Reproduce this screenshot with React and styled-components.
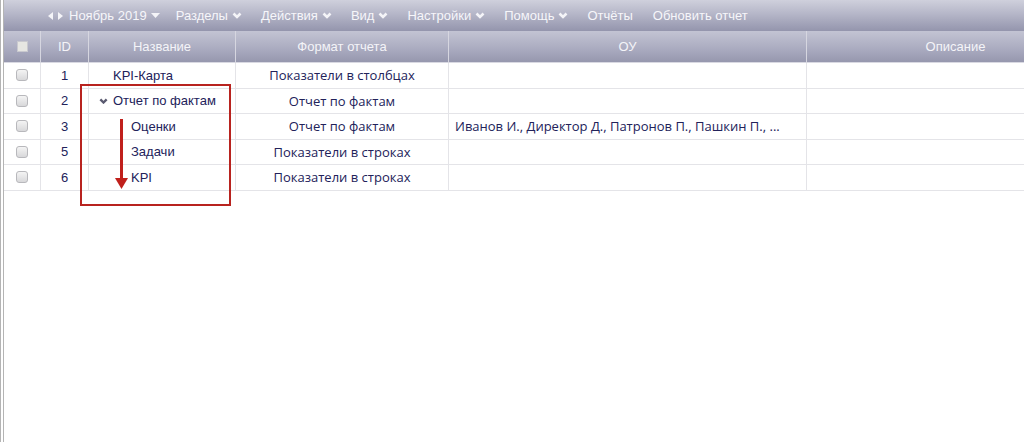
import React from "react";
import styled, { createGlobalStyle } from "styled-components";

const Global = createGlobalStyle`
  html, body { margin: 0; padding: 0; background: #fff; }
  body { font-family: "Liberation Sans", Arial, sans-serif; }
`;

const COLS = "36px 48px 147px 213px 358px 298px";

const Page = styled.div`
  position: relative;
  height: 442px;
  overflow: hidden;
  border-left: 1px solid #b4b4b4;
  padding-left: 2px;
`;

const Frame = styled.div`
  height: 100%;
  border-left: 1px solid #b4b4b4;
  overflow: hidden;
`;

const Toolbar = styled.div`
  height: 31px;
  display: flex;
  align-items: center;
  padding-left: 44px;
  gap: 17px;
  background: linear-gradient(#cfd0dc, #b5b6c8 45%, #9495ad);
  color: #f6f6fa;
  font-size: 13px;
  white-space: nowrap;
`;

const MenuItem = styled.div`
  display: flex;
  align-items: center;
  gap: 4px;
  margin-right: ${(p) => p.$extra || 0}px;
`;

const Arrows = styled.div`
  display: flex;
  align-items: center;
  gap: 5px;
  margin-right: -11px;
`;

const HeaderRow = styled.div`
  display: grid;
  grid-template-columns: ${COLS};
  height: 32px;
  background: linear-gradient(#c3c4d3, #a9aabf 60%, #9697ae);
  border-bottom: 1px solid #d9d9e2;
  box-sizing: border-box;
`;

const HeadCell = styled.div`
  display: flex;
  align-items: center;
  justify-content: center;
  color: #f4f4f8;
  font-size: 13px;
  border-left: ${(p) => (p.$first ? "none" : "1px solid #d6d6e0")};
`;

const Row = styled.div`
  display: grid;
  grid-template-columns: ${COLS};
  height: 25.5px;
  box-sizing: border-box;
  border-bottom: 1px solid #e4e4e8;
`;

const Cell = styled.div`
  display: flex;
  align-items: center;
  justify-content: ${(p) => p.$align || "center"};
  padding-left: ${(p) => p.$pad || 0}px;
  color: #22225a;
  font-size: 13px;
  font-family: ${(p) => (p.$soft ? '"Open Sans", sans-serif' : '"Liberation Sans", Arial, sans-serif')};
  border-left: ${(p) => (p.$first ? "none" : "1px solid #e4e4e8")};
  white-space: nowrap;
  overflow: hidden;
`;

const Check = styled.div`
  width: 12px;
  height: 12px;
  border-radius: 3px;
  border: 1px solid #b8b8bc;
  background: linear-gradient(#f4f4f4, #d8d8da);
  box-sizing: border-box;
`;

const HeadCheck = styled.div`
  width: 11px;
  height: 11px;
  background: #e6e6e2;
  border: 1px solid #c9c9cf;
  box-sizing: border-box;
`;

const Toggle = styled.span`
  display: inline-flex;
  width: 14px;
  margin-left: -14px;
`;

const Annotation = styled.svg`
  position: absolute;
  left: 0;
  top: 0;
  pointer-events: none;
`;

const Chevron = ({ color = "#f4f4f8", size = 10 }) => (
  <svg width={size} height={size * 0.7} viewBox="0 0 10 7">
    <polyline points="1.5,1.5 5,5 8.5,1.5" fill="none" stroke={color} strokeWidth="2.6" />
  </svg>
);

const Caret = () => (
  <svg width="9" height="5" viewBox="0 0 9 5">
    <polygon points="0,0 9,0 4.5,5" fill="#f4f4f8" />
  </svg>
);

const Tri = ({ dir }) => (
  <svg width="5" height="8" viewBox="0 0 5 8">
    <polygon points={dir === "l" ? "5,0 5,8 0,4" : "0,0 0,8 5,4"} fill="#f4f4f8" />
  </svg>
);

const rows = [
  { id: 1, name: "KPI-Карта", level: 0, fmt: "Показатели в столбцах", ou: "" },
  { id: 2, name: "Отчет по фактам", level: 0, open: true, fmt: "Отчет по фактам", ou: "" },
  {
    id: 3,
    name: "Оценки",
    level: 1,
    fmt: "Отчет по фактам",
    ou: "Иванов И., Директор Д., Патронов П., Пашкин П., ...",
  },
  { id: 5, name: "Задачи", level: 1, fmt: "Показатели в строках", ou: "" },
  { id: 6, name: "KPI", level: 1, fmt: "Показатели в строках", ou: "" },
];

const menus = ["Разделы", "Действия", "Вид", "Настройки", "Помощь"];

export default function App() {
  return (
    <>
      <Global />
      <Page>
        <Frame>
          <Toolbar>
            <Arrows>
              <Tri dir="l" />
              <Tri dir="r" />
            </Arrows>
            <MenuItem $extra={-1}>
              Ноябрь 2019 <Caret />
            </MenuItem>
            {menus.map((m) => (
              <MenuItem key={m} $extra={2}>
                {m} <Chevron />
              </MenuItem>
            ))}
            <MenuItem $extra={3}>Отчёты</MenuItem>
            <MenuItem>Обновить отчет</MenuItem>
          </Toolbar>
          <HeaderRow>
            <HeadCell $first>
              <HeadCheck />
            </HeadCell>
            <HeadCell>ID</HeadCell>
            <HeadCell>Название</HeadCell>
            <HeadCell>Формат отчета</HeadCell>
            <HeadCell>ОУ</HeadCell>
            <HeadCell>Описание</HeadCell>
          </HeaderRow>
          {rows.map((r) => (
            <Row key={r.id}>
              <Cell $first>
                <Check />
              </Cell>
              <Cell>{r.id}</Cell>
              <Cell $align="flex-start" $pad={r.level ? 42 : 24}>
                {r.open && (
                  <Toggle>
                    <Chevron color="#5a5a70" size={9} />
                  </Toggle>
                )}
                {r.name}
              </Cell>
              <Cell $soft>{r.fmt}</Cell>
              <Cell $soft $align="flex-start" $pad={6}>
                {r.ou}
              </Cell>
              <Cell />
            </Row>
          ))}
        </Frame>
        <Annotation width="1024" height="442">
          <rect x="80" y="85" width="149" height="120" fill="none" stroke="#b8231f" strokeWidth="2" />
          <line x1="120.5" y1="119" x2="120.5" y2="180" stroke="#c0201c" strokeWidth="3" />
          <polygon points="114,178 127,178 120.5,189" fill="#c0201c" />
        </Annotation>
      </Page>
    </>
  );
}
